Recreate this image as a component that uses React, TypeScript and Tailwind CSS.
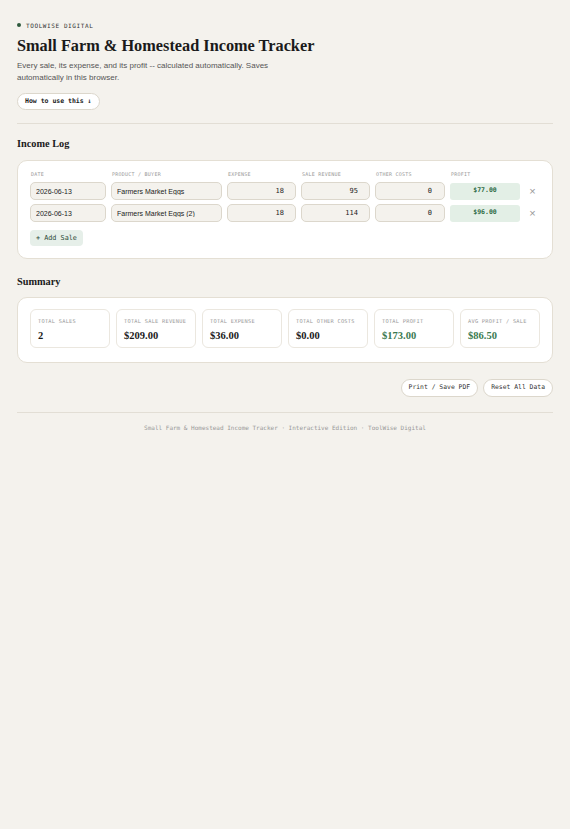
import { useMemo, useState } from "react";

type Sale = {
  id: number;
  date: string;
  product: string;
  expense: number;
  revenue: number;
  other: number;
};

const mono = "font-['DejaVu_Sans_Mono','Liberation_Mono',monospace]";
const serif = "font-['Liberation_Serif','Times_New_Roman',serif]";
const sans = "font-['Liberation_Sans',Arial,sans-serif]";

const money = (n: number) => `$${n.toFixed(2)}`;

const initial: Sale[] = [
  { id: 1, date: "2026-06-13", product: "Farmers Market Eggs", expense: 18, revenue: 95, other: 0 },
  { id: 2, date: "2026-06-13", product: "Farmers Market Eggs (2)", expense: 18, revenue: 114, other: 0 },
];

const cols = "grid grid-cols-[76px_111px_69px_69px_70px_70px_1fr] gap-x-[5px]";
const inputCls =
  "h-[18px] w-full rounded-[5px] border border-[#dcd7cc] bg-[#f4f2ed] px-[5px] text-[7px] text-[#222] outline-none";
const pill = `h-[18px] rounded-full border border-[#dcd7cc] bg-white px-[7px] text-[6.4px] text-[#333] ${mono}`;

export default function App() {
  const [sales, setSales] = useState<Sale[]>(initial);

  const totals = useMemo(() => {
    const revenue = sales.reduce((s, r) => s + r.revenue, 0);
    const expense = sales.reduce((s, r) => s + r.expense, 0);
    const other = sales.reduce((s, r) => s + r.other, 0);
    const profit = revenue - expense - other;
    return { count: sales.length, revenue, expense, other, profit, avg: sales.length ? profit / sales.length : 0 };
  }, [sales]);

  const update = (id: number, key: keyof Sale, value: string) =>
    setSales((rows) =>
      rows.map((r) =>
        r.id === id ? { ...r, [key]: key === "date" || key === "product" ? value : Number(value) || 0 } : r
      )
    );

  const addSale = () =>
    setSales((rows) => [
      ...rows,
      { id: Date.now(), date: "2026-06-13", product: "", expense: 0, revenue: 0, other: 0 },
    ]);

  const stats = [
    { label: "Total Sales", value: String(totals.count), green: false },
    { label: "Total Sale Revenue", value: money(totals.revenue), green: false },
    { label: "Total Expense", value: money(totals.expense), green: false },
    { label: "Total Other Costs", value: money(totals.other), green: false },
    { label: "Total Profit", value: money(totals.profit), green: true },
    { label: "Avg Profit / Sale", value: money(totals.avg), green: true },
  ];

  return (
    <div className={`min-h-[829px] bg-[#f4f2ed] ${sans}`}>
      <div className="px-[17px] pt-[20px] pb-[20px]">
        {/* header */}
        <div className={`flex h-[10px] items-center gap-[5px] text-[6px] tracking-[0.1em] text-[#333] ${mono}`}>
          <span className="h-[4px] w-[4px] rounded-full bg-[#2d5a3d]" />
          TOOLWISE DIGITAL
        </div>
        <h1 className={`mt-[6px] text-[16.3px] leading-[20px] font-bold text-[#1a1a1a] ${serif}`}>
          Small Farm &amp; Homestead Income Tracker
        </h1>
        <p className="mt-[4px] max-w-[270px] text-[8px] leading-[12px] text-[#555]">
          Every sale, its expense, and its profit -- calculated automatically. Saves automatically in this browser.
        </p>
        <button
          className={`mt-[9px] h-[17px] rounded-full border border-[#dcd7cc] bg-white px-[7px] text-[6.5px] font-bold text-[#222] ${mono}`}
        >
          How to use this ↓
        </button>

        <div className="mt-[13px] border-t border-[#e2ded5]" />

        {/* income log */}
        <h2 className={`mt-[12px] text-[10.3px] leading-[16px] font-bold text-[#1a1a1a] ${serif}`}>Income Log</h2>
        <div className="mt-[8px] rounded-[10px] border-[1.5px] border-[#e4dfd4] bg-white px-[12px] pt-[10px] pb-[11px]">
          <div className={`${cols} h-[7px] items-center text-[5px] uppercase tracking-[0.05em] text-[#999] ${mono}`}>
            <span className="pl-[1px]">Date</span>
            <span className="pl-[1px]">Product / Buyer</span>
            <span className="pl-[1px]">Expense</span>
            <span className="pl-[1px]">Sale Revenue</span>
            <span className="pl-[1px]">Other Costs</span>
            <span className="pl-[1px]">Profit</span>
            <span />
          </div>
          <div className="mt-[4px] flex flex-col gap-[4px]">
            {sales.map((r) => {
              const profit = r.revenue - r.expense - r.other;
              return (
                <div key={r.id} className={`${cols} items-center`}>
                  <input className={inputCls} value={r.date} onChange={(e) => update(r.id, "date", e.target.value)} />
                  <input className={inputCls} value={r.product} onChange={(e) => update(r.id, "product", e.target.value)} />
                  <input className={`${inputCls} text-right ${mono} pr-[11px]`} value={r.expense} onChange={(e) => update(r.id, "expense", e.target.value)} />
                  <input className={`${inputCls} text-right ${mono} pr-[11px]`} value={r.revenue} onChange={(e) => update(r.id, "revenue", e.target.value)} />
                  <input className={`${inputCls} text-right ${mono} pr-[12px]`} value={r.other} onChange={(e) => update(r.id, "other", e.target.value)} />
                  <div className={`flex h-[17px] items-center justify-center rounded-[3px] bg-[#e3efe6] text-[6.5px] font-bold text-[#2e6b45] ${mono}`}>
                    {money(profit)}
                  </div>
                  <button
                    className="flex justify-center text-[11px] leading-none text-[#999]"
                    onClick={() => setSales((rows) => rows.filter((x) => x.id !== r.id))}
                  >
                    ×
                  </button>
                </div>
              );
            })}
          </div>
          <button
            onClick={addSale}
            className={`mt-[8px] h-[16px] rounded-[4px] bg-[#e6efe9] px-[6px] text-[6.8px] text-[#2d4a38] ${mono}`}
          >
            + Add Sale
          </button>
        </div>

        {/* summary */}
        <h2 className={`mt-[15px] text-[10.3px] leading-[16px] font-bold text-[#1a1a1a] ${serif}`}>Summary</h2>
        <div className="mt-[7px] rounded-[10px] border-[1.5px] border-[#e4dfd4] bg-white px-[12px] pt-[11px] pb-[14px]">
          <div className="grid grid-cols-6 gap-[6px]">
            {stats.map((s) => (
              <div key={s.label} className="h-[39px] rounded-[6px] border border-[#ebe7df] bg-white px-[7px] pt-[8px]">
                <div className={`text-[5.3px] leading-[7px] uppercase tracking-[0.05em] text-[#999] whitespace-nowrap ${mono}`}>{s.label}</div>
                <div className={`mt-[4px] text-[10.5px] leading-[14px] font-bold ${serif} ${s.green ? "text-[#3a7a50]" : "text-[#1a1a1a]"}`}>
                  {s.value}
                </div>
              </div>
            ))}
          </div>
        </div>

        <div className="mt-[16px] flex justify-end gap-[5px]">
          <button className={pill} onClick={() => window.print()}>
            Print / Save PDF
          </button>
          <button className={pill} onClick={() => setSales([])}>
            Reset All Data
          </button>
        </div>

        <div className="mt-[15px] border-t border-[#e2ded5]" />
        <p className={`mt-[11px] text-center text-[6px] leading-[8px] text-[#999] ${mono}`}>
          Small Farm &amp; Homestead Income Tracker · Interactive Edition · ToolWise Digital
        </p>
      </div>
    </div>
  );
}
